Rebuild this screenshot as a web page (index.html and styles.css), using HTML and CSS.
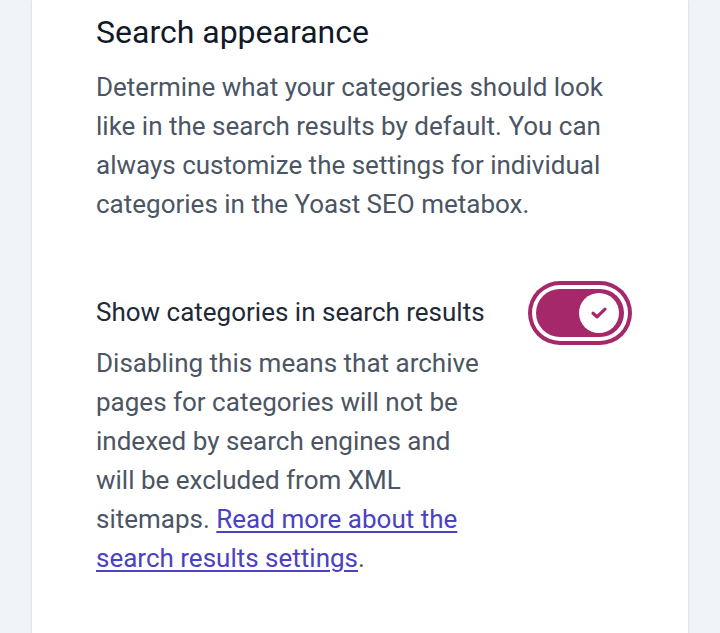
FILE: index.html
```html
<!DOCTYPE html>
<html lang="en">
<head>
<meta charset="utf-8">
<title>Search appearance</title>
<link rel="stylesheet" href="styles.css">
</head>
<body>
<div class="page">
  <section class="card">
    <h2 class="title">Search appearance</h2>
    <p class="intro">Determine what your categories should look like in the search results by default. You can always customize the settings for individual categories in the Yoast SEO metabox.</p>
    <div class="field">
      <div class="field-text">
        <div class="label">Show categories in search results</div>
        <p class="desc">Disabling this means that archive pages for categories will not be indexed by search engines and will be excluded from XML sitemaps. <a href="#" class="link">Read more about the search results settings</a>.</p>
      </div>
      <button class="toggle" type="button" aria-pressed="true">
        <span class="knob">
          <svg width="18" height="14" viewBox="0 0 18 14" aria-hidden="true"><path d="M3 7.2 L7 10.8 L15 3.2" fill="none" stroke="#a4286a" stroke-width="3.2" stroke-linecap="round" stroke-linejoin="round"/></svg>
        </span>
      </button>
    </div>
  </section>
</div>
</body>
</html>
```

FILE: styles.css
```css
html, body {
  margin: 0;
  padding: 0;
}
body {
  background: #f0f4f8;
  font-family: Roboto, "Liberation Sans", sans-serif;
  height: 633px;
  overflow: hidden;
}
.page {
  padding: 0 32px;
}
.card {
  background: #ffffff;
  box-shadow: 0 1px 3px rgba(15, 23, 42, 0.12), 0 0 1px rgba(15, 23, 42, 0.1);
  padding: 12px 56px 60px 64px;
  min-height: 640px;
  box-sizing: border-box;
}
.title {
  margin: 0;
  font-size: 32px;
  line-height: 40px;
  font-weight: 400;
  color: #111827;
}
.intro {
  margin: 16px 0 0;
  font-size: 26px;
  line-height: 39px;
  color: #4b5563;
  max-width: 530px;
}
.field {
  display: flex;
  align-items: flex-start;
  gap: 46px;
  margin-top: 69px;
}
.field-text {
  width: 394px;
}
.label {
  font-size: 26px;
  line-height: 39px;
  color: #1f2937;
}
.desc {
  margin: 12px 0 0;
  font-size: 26px;
  line-height: 39px;
  color: #4b5563;
}
.link {
  color: #4a42c0;
  text-decoration: underline;
  text-underline-offset: 3px;
  text-decoration-thickness: 2px;
}
.toggle {
  flex: none;
  margin-top: -4px;
  width: 88px;
  height: 48px;
  border: 0;
  border-radius: 24px;
  background: #a4286a;
  box-shadow: 0 0 0 4px #ffffff, 0 0 0 8px #a4286a;
  padding: 0 5px;
  display: flex;
  align-items: center;
  justify-content: flex-end;
  cursor: pointer;
}
.knob {
  width: 40px;
  height: 40px;
  border-radius: 50%;
  background: #ffffff;
  display: flex;
  align-items: center;
  justify-content: center;
}
.knob svg {
  display: block;
}
```
